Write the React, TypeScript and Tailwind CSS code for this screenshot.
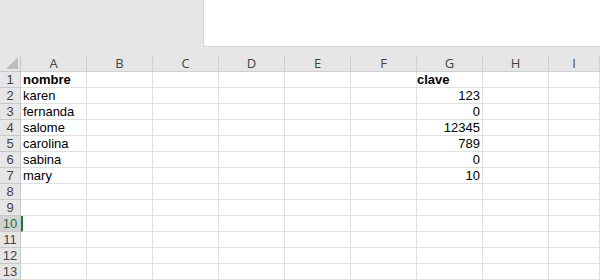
const cols = ['A', 'B', 'C', 'D', 'E', 'F', 'G', 'H', 'I']

const data: Record<number, { a?: string; g?: string; bold?: boolean }> = {
  1: { a: 'nombre', g: 'clave', bold: true },
  2: { a: 'karen', g: '123' },
  3: { a: 'fernanda', g: '0' },
  4: { a: 'salome', g: '12345' },
  5: { a: 'carolina', g: '789' },
  6: { a: 'sabina', g: '0' },
  7: { a: 'mary', g: '10' },
}

const rows = Array.from({ length: 13 }, (_, i) => i + 1)

export default function App() {
  return (
    <div className="w-[600px] h-[280px] overflow-hidden bg-white font-['Liberation_Sans',Arial,sans-serif]">
      {/* ribbon / formula area */}
      <div className="h-[56px] bg-[#e6e6e6] flex">
        <div className="w-[203px]" />
        <div className="flex-1 h-[47px] bg-white border-l border-b border-[#d6d6d6]" />
      </div>

      <div className="grid grid-cols-[21px_repeat(8,66px)_1fr] auto-rows-[16px]">
        {/* header row */}
        <div className="relative bg-[#e6e6e6] border-r border-b border-[#c8c8c8]">
          <svg className="absolute right-[2px] bottom-[2px]" width="12" height="12" viewBox="0 0 12 12">
            <polygon points="12,0 12,12 0,12" fill="#bdbdbd" />
          </svg>
        </div>
        {cols.map((c) => (
          <div
            key={c}
            className="bg-[#e6e6e6] border-r border-b border-[#d0d0d0] flex items-center justify-center text-[13px] text-[#444] leading-[15px] font-['Open_Sans',sans-serif]"
          >
            {c}
          </div>
        ))}

        {rows.map((r) => {
          const d = data[r] || {}
          const active = r === 10
          return [
            <div
              key={`h${r}`}
              className={`border-r border-b border-[#c8c8c8] flex items-center justify-center text-[13px] leading-[14px] ${
                active ? 'bg-[#d2d2d2] text-[#217346]' : 'bg-[#e6e6e6] text-[#444]'
              }`}
            >
              {r}
            </div>,
            ...cols.map((c) => (
              <div
                key={`${c}${r}`}
                className={`border-r border-b border-[#e1e1e1] flex items-end pb-[1px] text-[13px] leading-none text-black whitespace-nowrap ${
                  c === 'G' ? 'justify-end pr-[2px]' : 'pl-[2px]'
                } ${d.bold ? 'font-bold' : ''} ${c === 'A' && active ? 'border-l-2 border-l-[#217346]' : ''}`}
              >
                {c === 'A' ? d.a : c === 'G' ? (d.bold ? <span className="mr-auto">{d.g}</span> : d.g) : null}
              </div>
            )),
          ]
        })}
      </div>
    </div>
  )
}
